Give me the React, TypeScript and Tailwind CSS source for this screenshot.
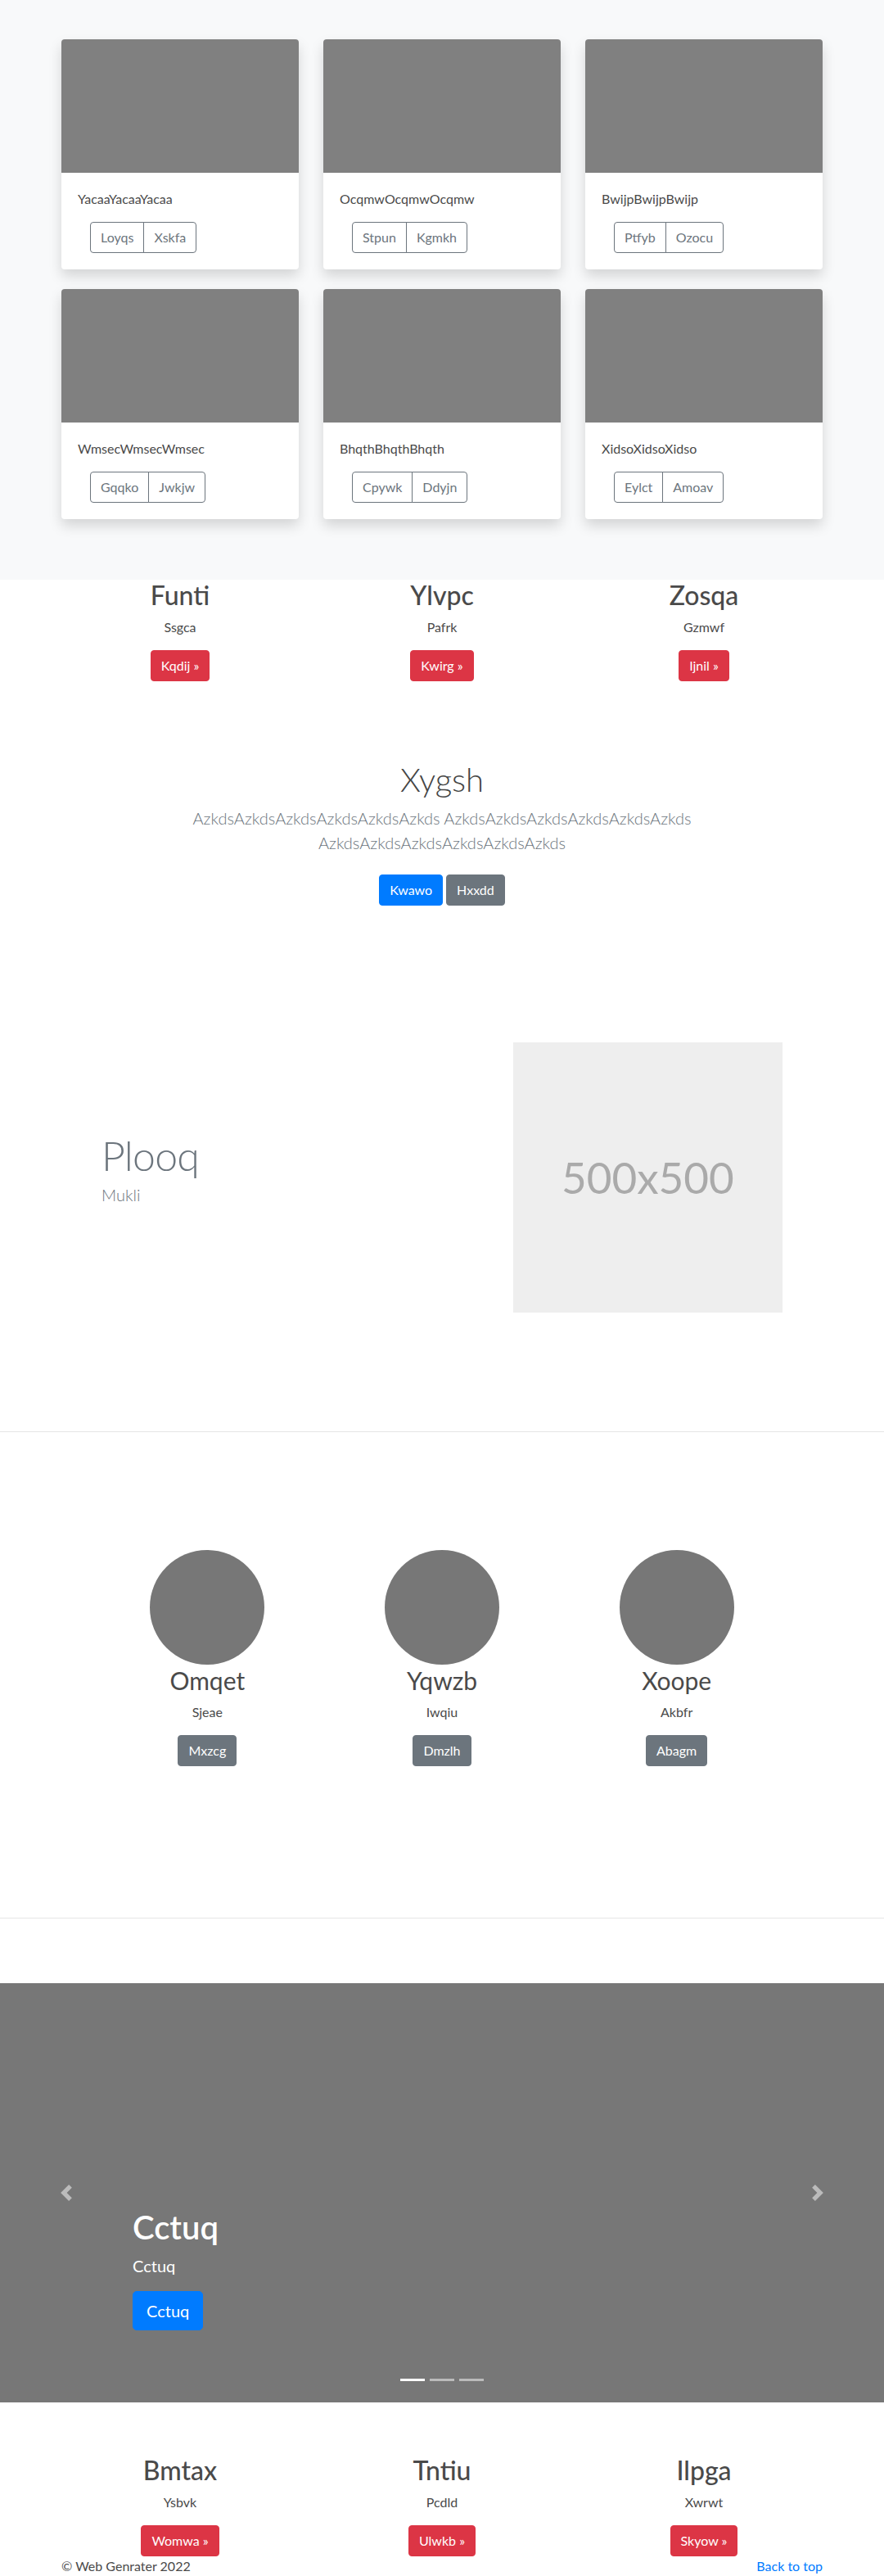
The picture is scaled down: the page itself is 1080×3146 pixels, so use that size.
import React from "react";

const albumCards = [
	{ title: "YacaaYacaaYacaa", buttons: ["Loyqs", "Xskfa"] },
	{ title: "OcqmwOcqmwOcqmw", buttons: ["Stpun", "Kgmkh"] },
	{ title: "BwijpBwijpBwijp", buttons: ["Ptfyb", "Ozocu"] },
	{ title: "WmsecWmsecWmsec", buttons: ["Gqqko", "Jwkjw"] },
	{ title: "BhqthBhqthBhqth", buttons: ["Cpywk", "Ddyjn"] },
	{ title: "XidsoXidsoXidso", buttons: ["Eylct", "Amoav"] },
];

const topCols = [
	{ title: "Funti", text: "Ssgca", btn: "Kqdij" },
	{ title: "Ylvpc", text: "Pafrk", btn: "Kwirg" },
	{ title: "Zosqa", text: "Gzmwf", btn: "Ijnil" },
];

const people = [
	{ name: "Omqet", text: "Sjeae", btn: "Mxzcg" },
	{ name: "Yqwzb", text: "Iwqiu", btn: "Dmzlh" },
	{ name: "Xoope", text: "Akbfr", btn: "Abagm" },
];

const bottomCols = [
	{ title: "Bmtax", text: "Ysbvk", btn: "Womwa" },
	{ title: "Tntiu", text: "Pcdld", btn: "Ulwkb" },
	{ title: "Ilpga", text: "Xwrwt", btn: "Skyow" },
];

function Card({ title, buttons }: { title: string; buttons: string[] }) {
	return (
		<div className="bg-white rounded-[4px] overflow-hidden shadow-[0_8px_16px_rgba(0,0,0,0.15)]">
			<div className="h-[163px] bg-[#808080]" />
			<div className="p-5">
				<p className="text-base leading-6 text-[#4a4a4a] mb-4">{title}</p>
				<div className="flex w-fit ml-[15px]">
					<button className="border border-[#6c757d] text-[#6c757d] rounded-l-[4px] px-3 py-[6px] text-base leading-6">
						{buttons[0]}
					</button>
					<button className="-ml-px border border-[#6c757d] text-[#6c757d] rounded-r-[4px] px-3 py-[6px] text-base leading-6">
						{buttons[1]}
					</button>
				</div>
			</div>
		</div>
	);
}

function ThreeCols({ cols }: { cols: { title: string; text: string; btn: string }[] }) {
	return (
		<div className="w-[960px] mx-auto grid grid-cols-3">
			{cols.map((c) => (
				<div key={c.title} className="px-[15px] text-center">
					<h2 className="text-[32px] leading-[38.4px] font-medium text-[#4a4a4a] mb-2">
						{c.title}
					</h2>
					<p className="text-base leading-6 text-[#4a4a4a] mb-4">{c.text}</p>
					<div className="flex justify-center mb-4">
						<a
							href="#"
							className="border border-[#dc3545] bg-[#dc3545] text-white rounded-[4px] px-3 py-[6px] text-base leading-6"
						>
							{c.btn} »
						</a>
					</div>
				</div>
			))}
		</div>
	);
}

export default function App() {
	return (
		<div className="flex flex-col font-['Lato',sans-serif] text-[#4a4a4a] bg-white">
			{/* album */}
			<section className="bg-[#f8f9fa] pt-12 pb-[50px]">
				<div className="w-[960px] mx-auto grid grid-cols-3">
					{albumCards.map((c) => (
						<div key={c.title} className="px-[15px] mb-6">
							<Card title={c.title} buttons={c.buttons} />
						</div>
					))}
				</div>
			</section>

			<ThreeCols cols={topCols} />

			{/* jumbotron */}
			<section className="pt-[80px] pb-6 text-center">
				<h1 className="text-[40px] leading-[48px] font-light text-[#444] mb-2">Xygsh</h1>
				<p className="w-[640px] mx-auto text-[20px] leading-[30px] font-light text-[#6c757d] mb-6">
					AzkdsAzkdsAzkdsAzkdsAzkdsAzkds AzkdsAzkdsAzkdsAzkdsAzkdsAzkds
					AzkdsAzkdsAzkdsAzkdsAzkdsAzkds
				</p>
				<div className="flex justify-center gap-1">
					<a
						href="#"
						className="border border-[#007bff] bg-[#007bff] text-white rounded-[4px] px-3 py-[6px] text-base leading-6"
					>
						Kwawo
					</a>
					<a
						href="#"
						className="border border-[#6c757d] bg-[#6c757d] text-white rounded-[4px] px-3 py-[6px] text-base leading-6"
					>
						Hxxdd
					</a>
				</div>
			</section>

			{/* featurette */}
			<div className="w-[862px] mx-auto flex items-center mt-[143px]">
				<div className="w-7/12 px-[15px]">
					<h2 className="text-[50px] leading-none font-light tracking-[-0.8px] text-[#6c757d] mb-2">
						Plooq
					</h2>
					<p className="text-[20px] leading-[30px] font-light text-[#6c757d] mb-4">Mukli</p>
				</div>
				<div className="w-5/12 px-[15px]">
					<div className="aspect-square bg-[#eee] flex items-center justify-center text-[53px] text-[#aaa]">
						500x500
					</div>
				</div>
			</div>

			<div className="h-px bg-[#e6e6e6] mt-[145px]" />

			{/* people */}
			<div className="w-[860px] mx-auto grid grid-cols-3 mt-[144px]">
				{people.map((p) => (
					<div key={p.name} className="px-[15px] text-center">
						<div className="w-[140px] h-[140px] rounded-full bg-[#777] mx-auto" />
						<h2 className="text-[30px] leading-[38px] font-normal text-[#4a4a4a] mb-2">
							{p.name}
						</h2>
						<p className="text-base leading-6 text-[#4a4a4a] mb-4">{p.text}</p>
						<div className="flex justify-center">
							<a
								href="#"
								className="border border-[#6c757d] bg-[#6c757d] text-white rounded-[4px] px-3 py-[6px] text-base leading-6"
							>
								{p.btn}
							</a>
						</div>
					</div>
				))}
			</div>

			<div className="h-px bg-[#e6e6e6] mt-[185px]" />

			{/* carousel */}
			<div className="relative h-[512px] bg-[#777] mt-[79px]">
				<a href="#" className="absolute inset-y-0 left-0 w-[15%] flex items-center justify-center opacity-50">
					<svg width="20" height="20" viewBox="0 0 8 8" fill="#fff">
						<path d="M5.25 0l-4 4 4 4 1.5-1.5L4.25 4l2.5-2.5L5.25 0z" />
					</svg>
				</a>
				<a href="#" className="absolute inset-y-0 right-0 w-[15%] flex items-center justify-center opacity-50">
					<svg width="20" height="20" viewBox="0 0 8 8" fill="#fff">
						<path d="M2.75 0l-1.5 1.5L3.75 4l-2.5 2.5L2.75 8l4-4-4-4z" />
					</svg>
				</a>
				<div className="absolute left-[15%] right-[15%] bottom-[88px] text-white">
					<h1 className="text-[40px] leading-[48px] font-semibold mb-2">Cctuq</h1>
					<p className="text-[20px] leading-[30px] mb-4">Cctuq</p>
					<a
						href="#"
						className="inline-block align-top border border-[#007bff] bg-[#007bff] text-white rounded-[5px] px-4 py-2 text-[20px] leading-[30px]"
					>
						Cctuq
					</a>
				</div>
				<div className="absolute bottom-[26px] left-0 right-0 flex justify-center gap-[6px]">
					<span className="w-[30px] h-[3px] bg-white" />
					<span className="w-[30px] h-[3px] bg-white opacity-50" />
					<span className="w-[30px] h-[3px] bg-white opacity-50" />
				</div>
			</div>

			<div className="pt-[64px]">
				<ThreeCols cols={bottomCols} />
			</div>

			<footer className="w-[960px] mx-auto px-[15px] flex justify-between text-base leading-6 -mt-4">
				<p className="text-[#4a4a4a]">© Web Genrater 2022</p>
				<a href="#" className="text-[#007bff]">
					Back to top
				</a>
			</footer>
		</div>
	);
}
